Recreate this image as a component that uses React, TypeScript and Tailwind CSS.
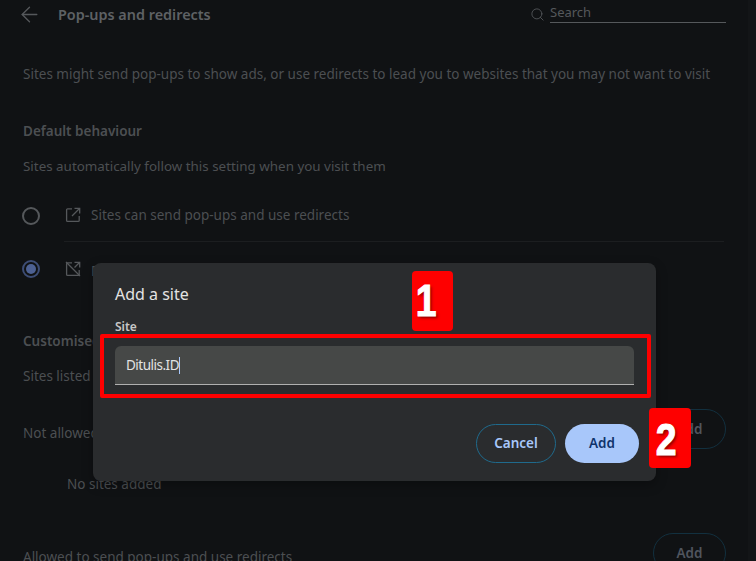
import { ArrowLeft, Search } from "lucide-react";

function OpenIcon() {
  return (
    <svg viewBox="0 0 16 16" className="h-4 w-4 shrink-0" fill="none" stroke="#55585b" strokeWidth="1.3">
      <path d="M7 1.8H2.6a1 1 0 0 0-1 1v10.600a1 1 0 0 0 1 1h10.600a1 1 0 0 0 1-1V9" />
      <path d="M9.500 1.300h5.200v5.200M14.500 1.500 7 9" />
    </svg>
  );
}

function BlockedIcon() {
  return (
    <svg viewBox="0 0 16 16" className="h-4 w-4 shrink-0" fill="none" stroke="#55585b" strokeWidth="1.3">
      <path d="M7 1.8H2.6a1 1 0 0 0-1 1v10.600a1 1 0 0 0 1 1h10.600a1 1 0 0 0 1-1V9" />
      <path d="M9.500 1.300h5.200v5.200M14.500 1.500 9.500 6.500M1 1l14 14" />
    </svg>
  );
}

function AddOutline() {
  return (
    <button className="h-[40px] w-[73px] rounded-full border border-[#12303f] text-[13.500px] font-semibold text-[#50555e]">
      Add
    </button>
  );
}

export default function App() {
  return (
    <div className="relative flex h-[561px] w-[756px] overflow-hidden bg-[#101214] font-['Noto_Sans',sans-serif] text-[13.500px] text-[#4c4f52]">
      <div className="w-[748px] shrink-0">
        <div className="flex h-[29px] items-center pl-[17px] pr-[22px]">
          <ArrowLeft size={25} strokeWidth={1.3} className="text-[#55585b]" />
          <div className="ml-[16px] text-[14.400px] font-semibold text-[#5e6164]">Pop-ups and redirects</div>
          <Search size={15} strokeWidth={1.4} className="ml-auto mr-[5px] text-[#55585b]" />
          <div className="mb-[4px] w-[176px] border-b border-[#55585b] text-[13px] leading-[19px] text-[#55585b]">Search</div>
        </div>

        <div className="mt-[36px] pl-[23px] leading-[18px]">
          Sites might send pop-ups to show ads, or use redirects to lead you to websites that you may not want to visit
        </div>

        <div className="mt-[39px] pl-[23px] font-semibold leading-[18px]">Default behaviour</div>
        <div className="mt-[17px] pl-[23px] text-[13.400px] leading-[18px]">Sites automatically follow this setting when you visit them</div>

        <div className="mt-[14px] flex h-[53px] items-center pl-[22px] pr-[24px]">
          <div className="h-[18px] w-[18px] rounded-full border-2 border-[#55585b]" />
          <div className="ml-[24px] flex h-full flex-1 items-center gap-[10px] border-b border-[#1c1e20] pl-[1px]">
            <OpenIcon />
            <span>Sites can send pop-ups and use redirects</span>
          </div>
        </div>

        <div className="flex h-[53px] items-center pl-[22px] pr-[24px]">
          <div className="flex h-[18px] w-[18px] items-center justify-center rounded-full border-2 border-[#3d4d75]">
            <div className="h-[10px] w-[10px] rounded-full bg-[#4d6193]" />
          </div>
          <div className="ml-[24px] flex h-full flex-1 items-center gap-[10px] pl-[1px]">
            <BlockedIcon />
            <span className="mt-[6px]">Don't allow sites to send pop-ups or use redirects</span>
          </div>
        </div>

        <div className="mt-[37px] pl-[23px] font-semibold leading-[18px]">Customised behaviours</div>
        <div className="mt-[17px] pl-[23px] leading-[18px]">Sites listed below follow a custom setting instead of the default</div>

        <div className="mt-[24px] flex h-[40px] items-center justify-between pl-[23px] pr-[22px]">
          <span className="mt-[8px]">Not allowed to send pop-ups or use redirects</span>
          <AddOutline />
        </div>
        <div className="mt-[26px] pl-[67px] leading-[18px]">No sites added</div>

        <div className="mt-[40px] flex h-[40px] items-center justify-between pl-[23px] pr-[22px]">
          <span className="mt-[8px]">Allowed to send pop-ups and use redirects</span>
          <AddOutline />
        </div>
      </div>
      <div className="flex-1 bg-[#131517]" />

      {/* dialog */}
      <div className="absolute left-[93px] top-[263px] flex h-[218px] w-[563px] flex-col rounded-[8px] bg-[#2a2c2e] px-[22px] shadow-[0_4px_12px_rgba(0,0,0,0.3)]">
        <div className="mt-[20px] text-[16px] leading-[22px] text-[#e3e3e3]">Add a site</div>
        <div className="mt-[14px] text-[12px] font-semibold leading-[16px] text-[#c7c7c7]">Site</div>
        <div className="mt-[11px] flex h-[39px] items-center rounded-t-[6px] border-b border-[#b0b0b0] bg-[#464847] pl-[11px] text-[13.500px] tracking-[-0.5px] text-[#e3e3e3]">
          Ditulis.ID
          <span className="h-[17px] w-px bg-[#a8c7fa]" />
        </div>
        <div className="mt-[39px] flex justify-end gap-[9px]">
          <button className="h-[39px] w-[80px] rounded-full border border-[#1f6a8c] text-[13.500px] font-semibold text-[#a8c7fa]">
            Cancel
          </button>
          <button className="mr-[-5px] h-[39px] w-[74px] rounded-full bg-[#a8c7fa] text-[13.500px] font-semibold text-[#10336b]">
            Add
          </button>
        </div>
      </div>

      {/* annotations */}
      <div className="absolute left-[100px] top-[334px] h-[64px] w-[551px] rounded-[2px] border-4 border-[#fe0000]" />
      <div className="absolute left-[412px] top-[271px] flex h-[60px] w-[41px] items-center justify-center rounded-[4px] bg-[#fe0000] font-['Liberation_Sans',sans-serif] text-[44px] font-bold text-white">
        <span className="-translate-x-[6px] scale-x-[0.85] [-webkit-text-stroke:1px_white] [text-shadow:2px_2px_3px_rgba(90,0,0,0.7)]">1</span>
      </div>
      <div className="absolute left-[649px] top-[408px] flex h-[60px] w-[42px] items-center justify-center rounded-[4px] bg-[#fe0000] font-['Liberation_Sans',sans-serif] text-[44px] font-bold text-white">
        <span className="-translate-x-[4px] translate-y-[2px] scale-x-[0.85] [-webkit-text-stroke:1px_white] [text-shadow:2px_2px_3px_rgba(90,0,0,0.7)]">2</span>
      </div>
    </div>
  );
}
